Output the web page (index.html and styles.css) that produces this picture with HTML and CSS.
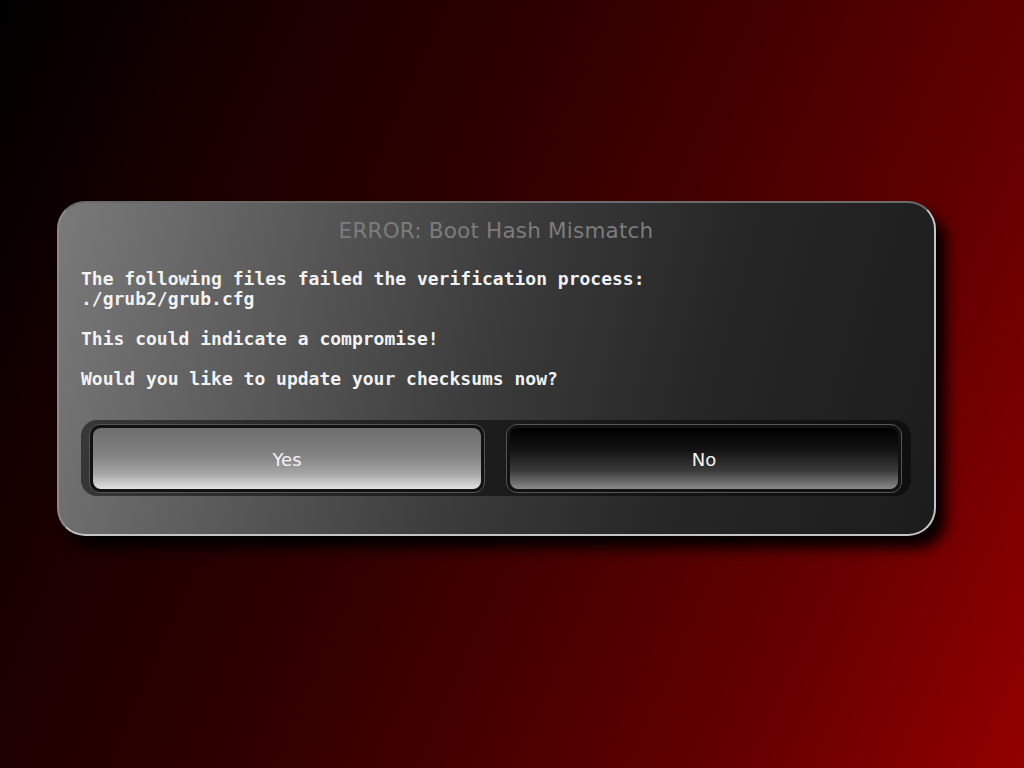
FILE: index.html
```html
<!DOCTYPE html>
<html>
<head>
<meta charset="utf-8">
<title>Boot Hash Mismatch</title>
<link rel="stylesheet" href="styles.css">
</head>
<body>
<div class="screen">
  <div class="dialog">
    <div class="title">ERROR: Boot Hash Mismatch</div>
    <div class="message">
      <p>The following files failed the verification process:<br>./grub2/grub.cfg</p>
      <p>This could indicate a compromise!</p>
      <p>Would you like to update your checksums now?</p>
    </div>
    <div class="buttons">
      <div class="btn btn-yes"><div class="btn-face">Yes</div></div>
      <div class="btn btn-no"><div class="btn-face">No</div></div>
    </div>
  </div>
</div>
</body>
</html>
```
FILE: styles.css
```css
html, body {
  margin: 0;
  padding: 0;
}
body {
  width: 1024px;
  height: 768px;
  overflow: hidden;
  background: linear-gradient(114deg, #000000 0%, #1c0000 22%, #2f0000 42%, #480000 60%, #650000 79%, #930000 100%);
}
.screen {
  padding: 201px 0 0 57px;
}
.dialog {
  box-sizing: border-box;
  width: 879px;
  height: 335px;
  border-radius: 28px;
  border: 2px solid #c4c4c4;
  border-top-color: #6a6a6a;
  border-left-color: #8a8a8a;
  background: linear-gradient(105deg, #7a7a7a 0%, #5a5a5a 25%, #3a3a3a 50%, #262626 72%, #1c1c1c 100%);
  box-shadow: 10px 12px 14px rgba(0, 0, 0, 0.95);
  padding: 13px 23px 0 22px;
  display: flex;
  flex-direction: column;
}
.title {
  text-align: center;
  font-family: "DejaVu Sans", sans-serif;
  font-size: 21.5px;
  line-height: 30px;
  color: #7c7c7c;
  letter-spacing: 0.2px;
}
.message {
  margin-top: 23px;
  font-family: "DejaVu Sans Mono", monospace;
  font-weight: bold;
  font-size: 18px;
  line-height: 20px;
  color: #f2f2f2;
}
.message p {
  margin: 0 0 20px 0;
}
.buttons {
  margin-top: 11px;
  height: 76px;
  box-sizing: border-box;
  border-radius: 16px;
  background: rgba(0, 0, 0, 0.5);
  padding: 4px 9px 3px 8px;
  display: flex;
  gap: 21px;
}
.btn {
  flex: 1;
  border-radius: 11px;
  border: 1px solid #555555;
  background: #111111;
  padding: 3px;
  display: flex;
}
.btn-face {
  flex: 1;
  border-radius: 8px;
  display: flex;
  align-items: center;
  justify-content: center;
  font-family: "DejaVu Sans", sans-serif;
  font-size: 18px;
  color: #f4f4f4;
  padding-top: 2px;
}
.btn-yes .btn-face {
  background: linear-gradient(180deg, #6e6e6e 0%, #828282 45%, #a5a5a5 75%, #e2e2e2 100%);
}
.btn-no .btn-face {
  background: linear-gradient(180deg, #000000 0%, #121212 35%, #3a3a3a 70%, #8a8a8a 100%);
}
```
